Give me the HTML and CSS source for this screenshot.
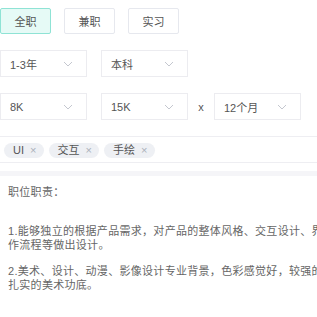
FILE: index.html
```html
<!DOCTYPE html>
<html lang="zh">

<head>
    <meta charset="UTF-8">
    <meta name="viewport" content="width=device-width, initial-scale=1">
    <title>职位编辑</title>
    <link rel="stylesheet" href="styles.css">
</head>

<body>

    <div class="tabs">
        <button class="tab active">全职</button>
        <button class="tab">兼职</button>
        <button class="tab">实习</button>
    </div>

    <div class="row">
        <div class="select"><span>1-3年</span><svg width="10" height="6" viewBox="0 0 10 6"><path d="M1 1l4 4 4-4" /></svg></div>
        <div class="select"><span>本科</span><svg width="10" height="6" viewBox="0 0 10 6"><path d="M1 1l4 4 4-4" /></svg></div>
    </div>

    <div class="row">
        <div class="select"><span>8K</span><svg width="10" height="6" viewBox="0 0 10 6"><path d="M1 1l4 4 4-4" /></svg></div>
        <div class="select"><span>15K</span><svg width="10" height="6" viewBox="0 0 10 6"><path d="M1 1l4 4 4-4" /></svg></div>
        <span class="times">x</span>
        <div class="select"><span>12个月</span><svg width="10" height="6" viewBox="0 0 10 6"><path d="M1 1l4 4 4-4" /></svg></div>
    </div>

    <div class="tags">
        <span class="tag">UI <i>×</i></span>
        <span class="tag">交互 <i>×</i></span>
        <span class="tag">手绘 <i>×</i></span>
    </div>

    <div class="desc">
        <p class="title">职位职责：</p>
        <p>1.能够独立的根据产品需求，对产品的整体风格、交互设计、界面结构、操作流程等做出设计。</p>
        <p>2.美术、设计、动漫、影像设计专业背景，色彩感觉好，较强的手绘能力和扎实的美术功底。</p>
    </div>

</body>

</html>
```

FILE: styles.css
```css
html {
    overflow: hidden;
}

body {
    margin: 0;
    font-family: 'Liberation Sans', 'Noto Sans CJK SC', sans-serif;
    font-size: 11px;
    color: #555;
    background: white;
}

.tabs {
    display: flex;
    gap: 13px;
    padding-top: 8px;
}

.tab {
    width: 51px;
    height: 26px;
    padding: 0;
    border: 1px solid #e6e8ee;
    border-radius: 2px;
    background: white;
    color: #555;
    font-family: inherit;
    font-size: 11px;
}

.tab.active {
    background: #e6faf6;
    border: 1px solid #8fe3d5;
}

.row {
    display: flex;
    align-items: center;
    gap: 14px;
    margin-top: 16px;
}

.row + .row {
    gap: 0;
}

.row + .row .select:nth-child(2) {
    margin-left: 14px;
}

.select {
    width: 87px;
    height: 27px;
    box-sizing: border-box;
    border: 1px solid #ececf0;
    display: flex;
    align-items: center;
    justify-content: space-between;
    padding: 0 13px 0 9px;
    color: #555;
}

.select svg {
    fill: none;
    stroke: #c4c7cf;
    stroke-width: 1;
}

.times {
    width: 26px;
    text-align: center;
    color: #555;
}

.tags {
    display: flex;
    gap: 5px;
    margin-top: 16px;
    padding: 6px 4px 4px;
    border-top: 1px solid #eeeef2;
    border-bottom: 1px solid #eeeef2;
}

.tag {
    height: 15px;
    line-height: 15px;
    padding: 0 7px 0 9px;
    border-radius: 8px;
    background: #eef0f4;
    color: #555;
}

.tag i {
    font-style: normal;
    color: #aab0ba;
    margin-left: 3px;
}

.desc {
    width: 372px;
    margin-top: 8px;
    border-top: 5px solid #f5f5f8;
    padding: 9px 8px 6px;
    color: #666;
    line-height: 14.5px;
    letter-spacing: 0.3px;
}

.desc p {
    margin: 0 0 11px;
}

.desc .title {
    margin-bottom: 24px;
}
```
